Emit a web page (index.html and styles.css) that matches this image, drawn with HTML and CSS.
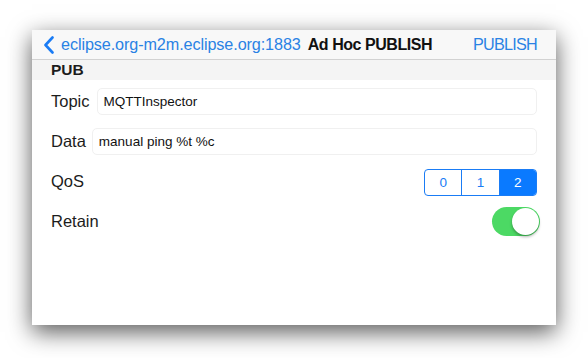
FILE: index.html
```html
<!DOCTYPE html>
<html>
<head>
<meta charset="utf-8">
<link rel="stylesheet" href="styles.css">
</head>
<body>
<div class="screen">
  <div class="navbar">
    <div class="back">
      <svg class="chev" width="12" height="18" viewBox="0 0 12 18"><path d="M9.5 1.5 L2.5 9 L9.5 16.5" fill="none" stroke="#1a7cf5" stroke-width="2.6" stroke-linecap="round" stroke-linejoin="round"/></svg>
      <span class="back-text">eclipse.org-m2m.eclipse.org:1883</span>
    </div>
    <div class="title">Ad Hoc PUBLISH</div>
    <div class="action">PUBLISH</div>
  </div>
  <div class="section">PUB</div>
  <div class="rows">
    <div class="row">
      <span class="label">Topic</span>
      <div class="field">MQTTInspector</div>
    </div>
    <div class="row">
      <span class="label">Data</span>
      <div class="field">manual ping %t %c</div>
    </div>
    <div class="row">
      <span class="label">QoS</span>
      <div class="segments">
        <div class="seg">0</div>
        <div class="seg">1</div>
        <div class="seg on">2</div>
      </div>
    </div>
    <div class="row">
      <span class="label">Retain</span>
      <div class="switch"><div class="knob"></div></div>
    </div>
  </div>
</div>
</body>
</html>
```
FILE: styles.css
```css
html, body { margin: 0; padding: 0; background: #ffffff; }
body {
  min-height: 358px;
  box-sizing: border-box;
  padding: 30px 32px 0 32px;
  font-family: "Liberation Sans", Arial, sans-serif;
}
.screen {
  width: 524px;
  height: 295px;
  background: #ffffff;
  box-shadow: 0 7px 22px rgba(0,0,0,0.65);
  overflow: hidden;
}
.navbar {
  height: 29px;
  background: #f8f8f8;
  border-bottom: 1px solid #d2d2d2;
  display: flex;
  align-items: center;
  font-size: 16.2px;
  padding: 0 19px 0 11px;
}
.back { display: flex; align-items: center; color: #2a82e4; }
.chev { margin-right: 6px; }
.back-text { letter-spacing: -0.1px; }
.title { font-weight: bold; color: #111; margin-left: 7px; font-size: 16px; letter-spacing: -0.45px; }
.action { margin-left: auto; color: #2a82e4; letter-spacing: -0.75px; }
.section {
  height: 20px;
  background: #f4f4f4;
  padding-left: 19px;
  font-weight: bold;
  font-size: 15.5px;
  line-height: 20px;
  color: #1c1c1c;
}
.rows { padding: 1px 19px 0 19px; }
.row {
  height: 40px;
  display: flex;
  align-items: center;
}
.label { font-size: 16.5px; color: #1c1c1c; margin-right: 7px; }
.field {
  flex: 1;
  height: 27px;
  box-sizing: border-box;
  border: 1px solid #f0f0f0;
  border-radius: 5px;
  padding-left: 6px;
  font-size: 13.5px;
  line-height: 25px;
  color: #111;
}
.row:nth-child(2) .label { margin-right: 6px; }
.segments {
  margin-left: auto;
  margin-top: 2px;
  display: flex;
  width: 113px;
  height: 27px;
  box-sizing: border-box;
  border: 1px solid #1a7cf5;
  border-radius: 4px;
  overflow: hidden;
}
.seg {
  flex: 1;
  text-align: center;
  line-height: 25px;
  font-size: 13.5px;
  color: #1a7cf5;
  border-left: 1px solid #1a7cf5;
}
.seg:first-child { border-left: none; }
.seg.on { background: #0a7aff; color: #fff; }
.switch {
  margin-left: auto;
  margin-right: -3px;
  width: 48px;
  height: 29px;
  border-radius: 15px;
  background: #4cd964;
  position: relative;
}
.knob {
  position: absolute;
  right: 1px;
  top: 1px;
  width: 27px;
  height: 27px;
  border-radius: 50%;
  background: #fff;
  box-shadow: 0 2px 3px rgba(0,0,0,0.3);
}
```
